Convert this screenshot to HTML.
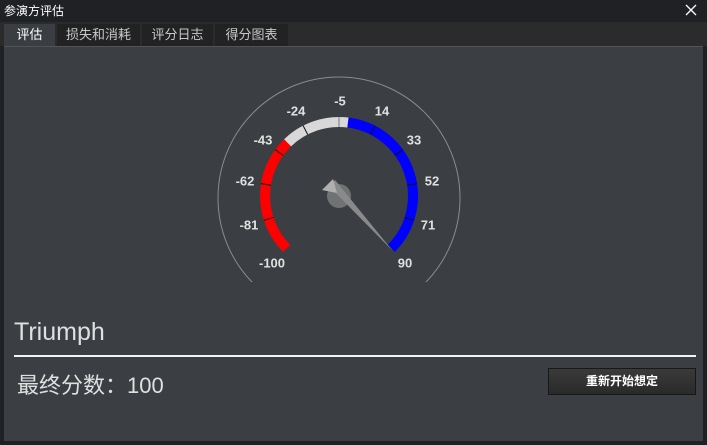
<!DOCTYPE html>
<html><head><meta charset="utf-8"><style>
*{margin:0;padding:0;box-sizing:border-box}
body{width:707px;height:445px;background:#1f2124;font-family:"Liberation Sans","Noto Sans CJK SC",sans-serif;position:relative;overflow:hidden;color:#ddd}
.title{position:absolute;left:4px;top:2px;font-size:12px;color:#fff}
.close{position:absolute;left:684px;top:3px}
.tabs{position:absolute;left:0;top:22px;width:707px;height:24px;background:#2b2b2b}
.tab{position:absolute;top:2px;height:22px;font-size:13px;line-height:21px;color:#c8c8c8;text-align:center;background:#222}
.tab.a{background:#3a3d41;color:#fff}
.panel{position:absolute;left:4px;top:46px;width:699px;height:395px;background:#3b3e42;border-top:1px solid #505358}
.tri{position:absolute;left:14px;top:318px;font-size:25px;color:#e0e0e0}
.line{position:absolute;left:14px;top:355px;width:682px;height:2px;background:#f4f4f4}
.score{position:absolute;left:17px;top:368px;font-size:22px;color:#e0e0e0}
.btn{position:absolute;left:548px;top:368px;width:148px;height:27px;background:linear-gradient(#3a3a3a,#2a2a2a);border:1px solid #181818;font-size:12px;font-weight:bold;color:#fff;text-align:center;line-height:25px}
</style></head><body>
<div class="title">参演方评估</div>
<svg class="close" width="14" height="14"><path d="M2 2L12 12M12 2L2 12" stroke="#fff" stroke-width="1.3"/></svg>
<div class="tabs">
<div class="tab a" style="left:4px;width:51px">评估</div>
<div class="tab" style="left:57px;width:83px">损失和消耗</div>
<div class="tab" style="left:142px;width:71px">评分日志</div>
<div class="tab" style="left:215px;width:73px">得分图表</div>
</div>
<div class="panel"></div>
<svg style="position:absolute;left:0;top:0" width="707" height="445">
<defs><clipPath id="c"><rect x="0" y="0" width="707" height="282"/></clipPath></defs>
<circle cx="339" cy="198" r="121" fill="none" stroke="#8a8c8f" stroke-width="1" clip-path="url(#c)"/>
<path d="M286.7 248.3A74 74 0 0 1 287.6 142.8" fill="none" stroke="#f00" stroke-width="10"/>
<path d="M287.6 142.8A74 74 0 0 1 348 122.5" fill="none" stroke="#d8d8d8" stroke-width="10"/>
<path d="M348 122.5A74 74 0 0 1 391.3 248.3" fill="none" stroke="#00f" stroke-width="10"/>
<g stroke="#111" stroke-width="1">
<g transform="rotate(-108 339 196)"><line x1="339" y1="117" x2="339" y2="127"/></g>
<g transform="rotate(-81 339 196)"><line x1="339" y1="117" x2="339" y2="127"/></g>
<g transform="rotate(-54 339 196)"><line x1="339" y1="117" x2="339" y2="127"/></g>
<g transform="rotate(-27 339 196)"><line x1="339" y1="117" x2="339" y2="127"/></g>
<line x1="339" y1="117" x2="339" y2="127" stroke="#777"/>
<g transform="rotate(27 339 196)"><line x1="339" y1="117" x2="339" y2="127"/></g>
<g transform="rotate(54 339 196)"><line x1="339" y1="117" x2="339" y2="127"/></g>
<g transform="rotate(81 339 196)"><line x1="339" y1="117" x2="339" y2="127"/></g>
<g transform="rotate(108 339 196)"><line x1="339" y1="117" x2="339" y2="127"/></g>
</g>
<g font-family="Liberation Sans" font-weight="bold" font-size="13" fill="#e0e0e0" text-anchor="middle" dominant-baseline="central">
<text x="272" y="263">-100</text><text x="249" y="225">-81</text><text x="245" y="181">-62</text>
<text x="263" y="140">-43</text><text x="296" y="111">-24</text><text x="340" y="101">-5</text>
<text x="382" y="111">14</text><text x="414" y="140">33</text><text x="432" y="181">52</text>
<text x="428" y="225">71</text><text x="405" y="263">90</text>
</g>
<circle cx="339" cy="196" r="12" fill="#707274"/>
<path d="M329 186L343 192L392 250Z" fill="#9a9a9a"/>
<path d="M329 186L335 180L392 250Z" fill="#8a8a8a"/>
<path d="M322 190L333 179L337 193Z" fill="#b0b0b0"/>
</svg>
<div class="tri">Triumph</div>
<div class="line"></div>
<div class="score">最终分数：100</div>
<div class="btn">重新开始想定</div>
</body></html>
